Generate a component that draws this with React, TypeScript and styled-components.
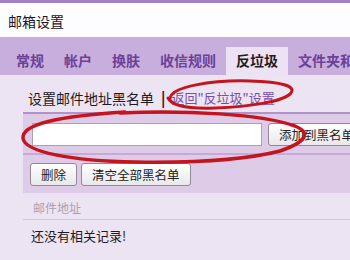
import React, {FC} from 'react';
import styled, {createGlobalStyle} from "styled-components";

const GlobalStyle = createGlobalStyle`
    html, body {
        margin: 0;
        padding: 0;
        width: 350px;
        height: 260px;
        overflow: hidden;
        background: #ede4f3;
    }
    * { box-sizing: border-box; }
`;

const FONT = `"Noto Sans CJK SC", "Noto Sans", sans-serif`;

const Page = styled.div`
    position: relative;
    width: 350px;
    height: 260px;
    overflow: hidden;
    font-family: ${FONT};
    background: #ede4f3;
`;

const TopStrip = styled.div`
    height: 3px;
    background: #a17fc3;
`;

const Header = styled.div`
    height: 34px;
    background: #fdfcfe;
    display: flex;
    align-items: center;
    padding: 2px 0 0 8px;
`;

const Title = styled.h1`
    margin: 0;
    font-size: 14px;
    font-weight: 400;
    color: #1e1428;
`;

const TabBar = styled.div`
    height: 38px;
    background: #c8aedc;
    display: flex;
    align-items: flex-end;
    padding-left: 6px;
    white-space: nowrap;
`;

const Tab = styled.div<{ $active?: boolean }>`
    height: 28px;
    line-height: 27px;
    padding: 0 10px;
    font-size: 14px;
    font-weight: 700;
    color: ${({$active}) => ($active ? "#1f1a24" : "#6d3f9a")};
    background: ${({$active}) => ($active ? "#ece2f3" : "transparent")};
    flex: none;
`;

const Content = styled.div`
    padding-left: 23px;
    width: 420px;
`;

const SectionHead = styled.div`
    height: 39px;
    padding: 8px 0 0 5px;
    border-bottom: 2px solid #b193c9;
    display: flex;
    align-items: center;
    white-space: nowrap;

    h2 {
        margin: 0;
        font-size: 14px;
        font-weight: 400;
        color: #1e1a22;
        line-height: 20px;
    }
    .sep {
        margin: 0 6px 0 7px;
        font-size: 15px;
        font-weight: 700;
        color: #1e1a22;
    }
    a {
        font-size: 13px;
        color: #7a4ea6;
        text-decoration: none;
    }
`;

const Panel = styled.div`
    background: #ddcbe7;
    padding: 9px 0 7px 9px;
`;

const Row = styled.div`
    display: flex;
    gap: 6px;
    align-items: center;
    white-space: nowrap;
`;

const ButtonRow = styled(Row)`
    gap: 4px;
    margin-left: -2px;
`;

const TextInput = styled.input`
    width: 230px;
    height: 23px;
    border: 1px solid #a9a2ad;
    background: #fff;
    padding: 0 4px;
    outline: none;
`;

const Button = styled.button`
    height: 23px;
    padding: 0 10px;
    border: 1px solid #8f8a93;
    border-radius: 3px;
    background: linear-gradient(#ffffff, #e9e7ea);
    font-family: ${FONT};
    font-size: 12.5px;
    color: #222;
    line-height: 21px;
    flex: none;
`;

const Divider = styled.div`
    height: 2px;
    background: #c5aad6;
    margin: 7px 0 8px -9px;
`;

const ListHead = styled.div`
    height: 27px;
    padding: 6px 0 0 10px;
    font-size: 12px;
    color: #aaa2b0;
    border-bottom: 1px solid #d5c5de;
`;

const Empty = styled.div`
    padding: 6px 0 0 8px;
    font-size: 13px;
    color: #1e1a22;
`;

const Marks = styled.svg`
    position: absolute;
    left: 0;
    top: 0;
    pointer-events: none;
`;

const tabs = ["常规", "帐户", "换肤", "收信规则", "反垃圾", "文件夹和标签"];

const App: FC = () => {
    return (
        <Page>
            <GlobalStyle />
            <TopStrip />
            <Header>
                <Title>邮箱设置</Title>
            </Header>
            <TabBar>
                {tabs.map((t) => (
                    <Tab key={t} $active={t === "反垃圾"}>{t}</Tab>
                ))}
            </TabBar>
            <Content>
                <SectionHead>
                    <h2>设置邮件地址黑名单</h2>
                    <span className="sep">|</span>
                    <a href="#">返回"反垃圾"设置</a>
                </SectionHead>
                <Panel>
                    <Row>
                        <TextInput />
                        <Button>添加到黑名单</Button>
                    </Row>
                    <Divider />
                    <ButtonRow>
                        <Button>删除</Button>
                        <Button>清空全部黑名单</Button>
                    </ButtonRow>
                </Panel>
                <ListHead>邮件地址</ListHead>
                <Empty>还没有相关记录!</Empty>
            </Content>
            <Marks width="350" height="260" viewBox="0 0 350 260">
                <path
                    d="M170 100 C 168 86, 215 80, 250 81 C 282 82, 296 86, 291 93 C 285 101, 250 107, 215 108 C 190 109, 172 106, 168 98"
                    fill="none" stroke="#c4141d" strokeWidth="3" strokeLinecap="round" />
                <path
                    d="M120 113 C 185 110, 262 114, 295 126 C 312 133, 306 142, 280 151 C 245 160, 195 163, 135 162 C 72 161, 24 152, 23 138 C 22 124, 60 116, 125 112"
                    fill="none" stroke="#c4141d" strokeWidth="3.5" strokeLinecap="round" />
            </Marks>
        </Page>
    );
};

export default App;
